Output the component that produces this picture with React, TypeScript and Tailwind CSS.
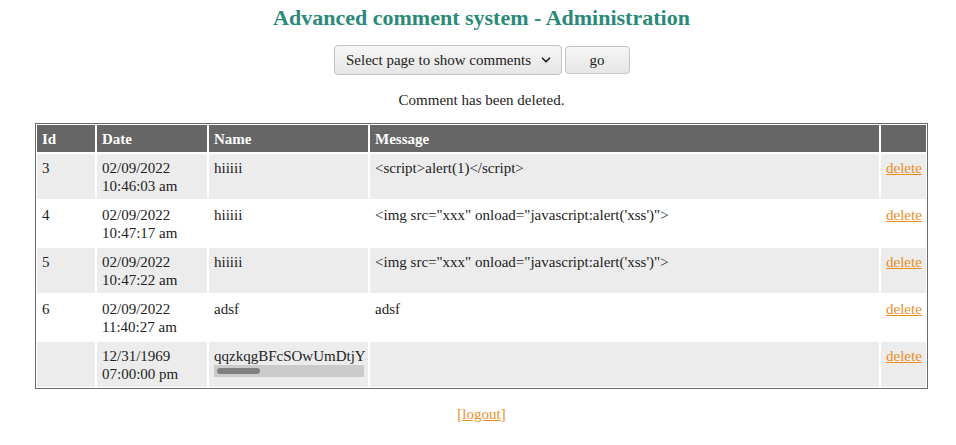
import { ChevronDown } from "lucide-react";

type Comment = {
  id: string;
  date: string;
  time: string;
  name: string;
  message: string;
  scroll?: boolean;
};

const comments: Comment[] = [
  { id: "3", date: "02/09/2022", time: "10:46:03 am", name: "hiiiii", message: "<script>alert(1)</script>" },
  { id: "4", date: "02/09/2022", time: "10:47:17 am", name: "hiiiii", message: `<img src="xxx" onload="javascript:alert('xss')">` },
  { id: "5", date: "02/09/2022", time: "10:47:22 am", name: "hiiiii", message: `<img src="xxx" onload="javascript:alert('xss')">` },
  { id: "6", date: "02/09/2022", time: "11:40:27 am", name: "adsf", message: "adsf" },
  { id: "", date: "12/31/1969", time: "07:00:00 pm", name: "qqzkqgBFcSOwUmDtjY", message: "", scroll: true },
];

const cell = "border border-white px-[5px] pt-[5px] pb-[4px] align-top text-left";

export default function App() {
  return (
    <div className="min-h-screen bg-white pl-[7px] font-['Liberation_Serif',serif] text-[15px] leading-[18px] text-[#222]">

      {/* HEADER */}
      <h1 className="pt-[5px] text-center text-[22px] font-bold leading-[26px] text-[#2a8a7a]">
        Advanced comment system - Administration
      </h1>

      {/* PAGE PICKER */}
      <div className="mt-[14px] flex justify-center gap-[3px]">
        <button className="flex h-[30px] w-[228px] items-center justify-center gap-[8px] rounded-[4px] border border-[#c4c4c4] bg-linear-to-b from-[#f6f6f6] to-[#e6e6e6] pl-[4px] text-[15px] text-[#222]">
          Select page to show comments
          <ChevronDown className="h-[14px] w-[14px]" strokeWidth={3} />
        </button>
        <button className="mt-px h-[28px] w-[65px] rounded-[4px] border border-[#c4c4c4] bg-linear-to-b from-[#f6f6f6] to-[#e6e6e6] text-[15px] text-[#222]">
          go
        </button>
      </div>

      <p className="mt-[16px] text-center">Comment has been deleted.</p>

      {/* TABLE */}
      <div className="mt-[14px] flex justify-center">
        <table className="w-[893px] table-fixed border-separate border-spacing-0 border border-[#6b6b6b]">
          <colgroup>
            <col className="w-[60px]" />
            <col className="w-[112px]" />
            <col className="w-[161px]" />
            <col className="w-[511px]" />
            <col className="w-[47px]" />
          </colgroup>
          <thead>
            <tr className="bg-[#666] text-white">
              <th className={cell}>Id</th>
              <th className={cell}>Date</th>
              <th className={cell}>Name</th>
              <th className={cell}>Message</th>
              <th className={cell}></th>
            </tr>
          </thead>
          <tbody>
            {comments.map((c, i) => (
              <tr key={i} className={i % 2 === 0 ? "bg-[#ececec]" : "bg-white"}>
                <td className={cell}>{c.id}</td>
                <td className={cell}>
                  {c.date}
                  <br />
                  {c.time}
                </td>
                <td className={cell}>
                  <div className="whitespace-nowrap">{c.name}</div>
                  {c.scroll && (
                    <div className="h-[12px] w-[150px] bg-[#cbcbcb] px-[3px] py-[3px]">
                      <div className="h-[6px] w-[43px] rounded-full bg-[#808080]" />
                    </div>
                  )}
                </td>
                <td className={cell}>{c.message}</td>
                <td className={cell}>
                  <a href="#" className="text-[#ec8e1e] underline">
                    delete
                  </a>
                </td>
              </tr>
            ))}
          </tbody>
        </table>
      </div>

      {/* FOOTER */}
      <p className="mt-[16px] text-center text-[#ec8e1e]">
        [<a href="#" className="underline">logout</a>]
      </p>
    </div>
  );
}
